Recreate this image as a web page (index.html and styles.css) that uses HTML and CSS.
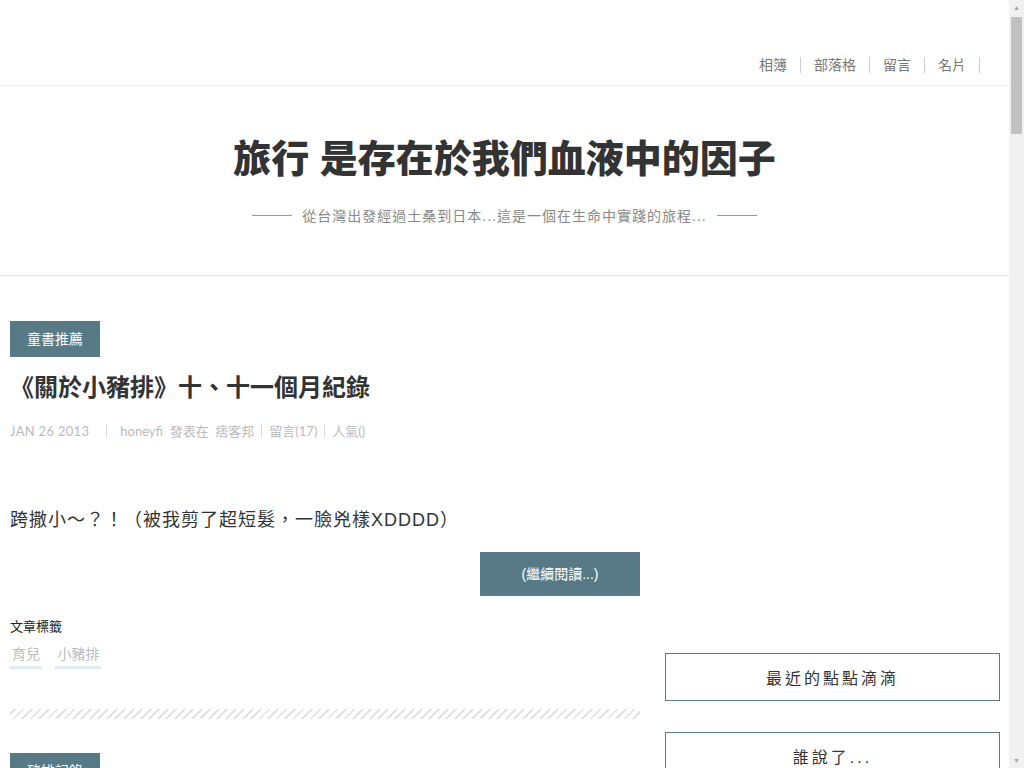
FILE: index.html
```html
<!DOCTYPE html>
<html lang="zh-Hant">
<head>
    <meta charset="UTF-8">
    <meta name="viewport" content="width=device-width, initial-scale=1.0">
    <title>旅行 是存在於我們血液中的因子</title>
    <link rel="stylesheet" href="styles.css">
</head>
<body>

<div class="top-bar">
    <ul class="top-nav">
        <li><a href="#">相簿</a></li>
        <li><a href="#">部落格</a></li>
        <li><a href="#">留言</a></li>
        <li><a href="#">名片</a></li>
    </ul>
</div>

<div class="blog-header">
    <h1 class="blog-title">旅行 是存在於我們血液中的因子</h1>
    <p class="blog-desc"><span class="line"></span>從台灣出發經過土桑到日本...這是一個在生命中實踐的旅程...<span class="line"></span></p>
</div>

<div class="wrapper">
    <div class="main">
        <div class="article">
            <a class="category" href="#">童書推薦</a>
            <h2 class="post-title">《關於小豬排》十、十一個月紀錄</h2>
            <div class="meta">
                <span class="date">JAN 26 2013</span>
                <span class="sep"></span>
                <span>honeyfi &nbsp;發表在 &nbsp;痞客邦</span>
                <span class="sep"></span>
                <span>留言(17)</span>
                <span class="sep"></span>
                <span>人氣()</span>
            </div>
            <p class="post-body">跨撒小～？！（被我剪了超短髮，一臉兇樣XDDDD）</p>
            <div class="more-row">
                <a class="more" href="#">(繼續閱讀...)</a>
            </div>
            <div class="tags">
                <div class="tags-title">文章標籤</div>
                <a href="#">育兒</a>
                <a href="#">小豬排</a>
            </div>
            <div class="hatch"></div>
        </div>

        <div class="article">
            <a class="category" href="#">豬排記錄</a>
            <h2 class="post-title">《關於小豬排》九個月紀錄</h2>
            <div class="meta">
                <span class="date">JAN 02 2013</span>
            </div>
            <p class="post-body">小豬排九個月了～</p>
        </div>
    </div>

    <div class="sidebar">
        <div class="box-title">最近的點點滴滴</div>
        <div class="box-title">誰說了...</div>
        <div class="box-title">分類</div>
    </div>
</div>

<!-- scrollbar look of the page window -->
<div class="scrollbar">
    <div class="sb-arrow">▲</div>
    <div class="sb-track"><div class="sb-thumb"></div></div>
    <div class="sb-arrow">▼</div>
</div>

</body>
</html>
```

FILE: styles.css
```css
body {
    margin: 0 15px 0 0;
    font-family: "Liberation Sans", "Noto Sans CJK TC", sans-serif;
    color: #333;
    background: #fff;
}
a {
    text-decoration: none;
    color: inherit;
}

.top-bar {
    height: 85px;
    border-bottom: 1px solid #ececec;
    display: flex;
    justify-content: flex-end;
    align-items: flex-end;
}
.top-nav {
    list-style: none;
    margin: 0 29px 12px 0;
    padding: 0;
    display: flex;
}
.top-nav li {
    font-size: 14px;
    color: #777;
    padding: 0 13px;
    border-right: 1px solid #ccc;
    line-height: 16px;
}

.blog-header {
    height: 189px;
    border-bottom: 1px solid #e3e3e3;
    text-align: center;
    overflow: hidden;
}
.blog-title {
    margin: 48px 0 0;
    font-size: 38px;
    font-weight: 900;
    color: #333;
    line-height: 50px;
}
.blog-desc {
    margin: 21px 0 0;
    font-size: 14px;
    letter-spacing: 1px;
    color: #888;
    display: flex;
    justify-content: center;
    align-items: center;
    gap: 10px;
}
.blog-desc .line {
    width: 40px;
    border-top: 1px solid #999;
}

.wrapper {
    display: flex;
    gap: 25px;
    padding: 45px 0 0 10px;
}
.main {
    width: 630px;
}
.sidebar {
    width: 335px;
    padding-top: 332px;
    display: flex;
    flex-direction: column;
    gap: 31px;
}
.box-title {
    height: 46px;
    border: 1px solid #5b7b87;
    font-size: 16px;
    letter-spacing: 3px;
    color: #333;
    display: flex;
    align-items: center;
    justify-content: center;
}

.category {
    display: inline-block;
    background: #587a87;
    color: #fff;
    font-size: 14px;
    width: 90px;
    height: 36px;
    line-height: 36px;
    text-align: center;
}
.post-title {
    margin: 14px 0 0;
    font-size: 24px;
    font-weight: bold;
    color: #333;
    line-height: 34px;
}
.meta {
    margin-top: 16px;
    font-family: "Lato", "Noto Sans CJK TC", sans-serif;
    font-size: 13px;
    color: #bbb;
    display: flex;
    align-items: center;
    gap: 5px;
}
.meta .date {
    letter-spacing: 0.3px;
    margin-right: 10px;
}
.meta .sep {
    height: 14px;
    border-left: 1px solid #ddd;
    margin: 0 2px;
}
.meta .date + .sep {
    margin-right: 8px;
}
.post-body {
    margin: 68px 0 0;
    font-size: 18px;
    letter-spacing: 1px;
    color: #333;
    line-height: 24px;
}
.more-row {
    display: flex;
    justify-content: flex-end;
    margin-top: 20px;
}
.more {
    display: block;
    width: 160px;
    height: 44px;
    line-height: 44px;
    text-align: center;
    background: #587a87;
    color: #fff;
    font-size: 14px;
}
.tags {
    margin-top: 20px;
}
.tags-title {
    font-size: 13px;
    color: #222;
    margin-bottom: 8px;
}
.tags a {
    display: inline-block;
    font-size: 14px;
    color: #bbb;
    padding: 0 2px 3px;
    border-bottom: 3px solid #deedf2;
    margin-right: 9px;
}
.hatch {
    margin-top: 40px;
    height: 10px;
    background: repeating-linear-gradient(-45deg, #fff 0, #fff 4px, #e3e3e3 4px, #e3e3e3 6px);
}
.article + .article {
    margin-top: 34px;
}
.article:last-child {
    padding-bottom: 400px;
}

.scrollbar {
    position: fixed;
    top: 0;
    right: 0;
    width: 15px;
    height: 100vh;
    background: #f1f1f1;
    display: flex;
    flex-direction: column;
}
.sb-arrow {
    height: 15px;
    font-size: 7px;
    color: #a3a3a3;
    text-align: center;
    line-height: 15px;
}
.sb-track {
    flex: 1;
    padding: 2px;
}
.sb-thumb {
    height: 117px;
    background: #c1c1c1;
}
```
